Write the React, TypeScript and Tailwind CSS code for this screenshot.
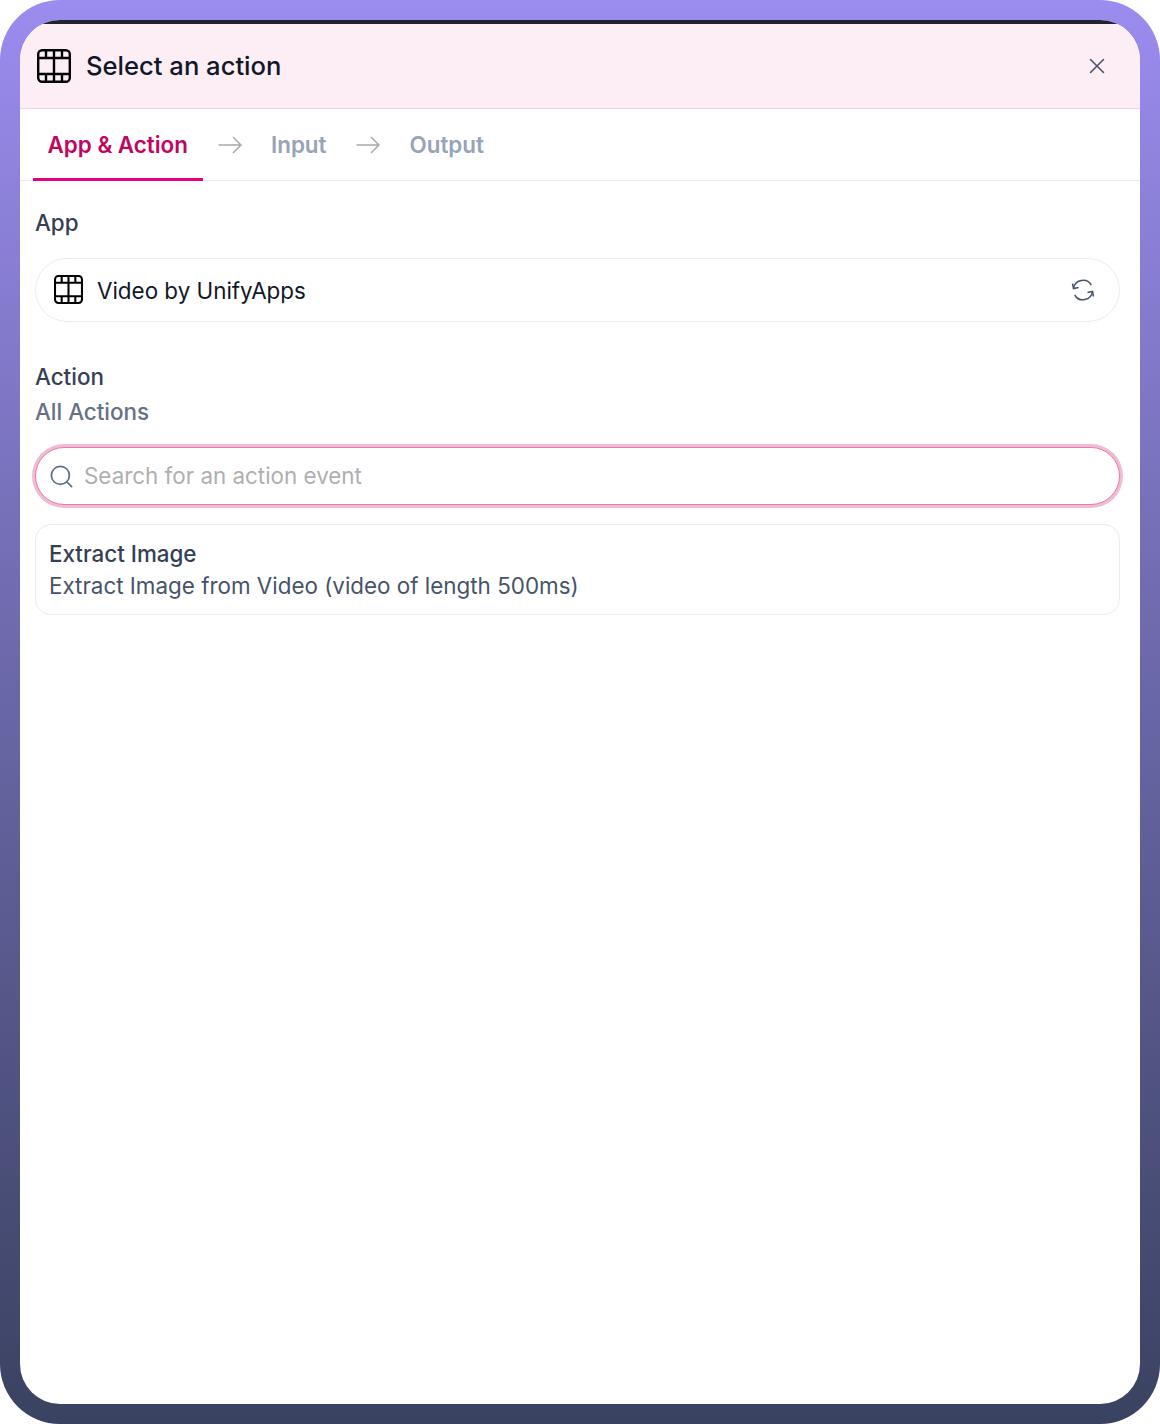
import React from 'react';
import { Search, X } from 'lucide-react';

const FilmIcon = ({ size }: { size: number }) => (
  <svg width={size} height={size} viewBox="0 0 34 34" fill="none" stroke="#000" strokeWidth="2.4">
    <rect x="1.2" y="1.2" width="31.6" height="31.6" rx="4" />
    <path d="M1.2 9h31.6M1.2 25h31.6M17 1.2v31.6M9 1.2V9M25 1.2V9M9 25v7.8M25 25v7.8" />
  </svg>
);

const StepArrow = () => (
  <svg width="24" height="18" viewBox="0 0 24 18" fill="none" stroke="#a8a8a8" strokeWidth="1.5" className="shrink-0">
    <path d="M0.5 9H23M15 1l8 8-8 8" />
  </svg>
);

const SyncIcon = () => (
  <svg width="24" height="24" viewBox="0 0 24 24" fill="none" stroke="#475467" strokeWidth="1.5">
    <path d="M2.5 10.5A9.6 9.6 0 0 1 20.3 7M21.5 13.5A9.6 9.6 0 0 1 3.7 17" />
    <path d="M1.5 5.5l1 5 5-1M22.5 18.5l-1-5-5 1" />
  </svg>
);

export default function App() {
  return (
    <div className="w-[1160px] h-[1424px] bg-white font-['Inter',sans-serif]">
      <div className="h-full rounded-[60px] p-5 bg-gradient-to-b from-[#9b8cef] to-[#3a4261]">
        <div className="h-full rounded-[40px] bg-white overflow-hidden flex flex-col">
          <div className="h-1 shrink-0 bg-[#1f2430]" />

          {/* Header */}
          <div className="h-[85px] shrink-0 bg-[#fdeef6] border-b border-[#fbcfe8] flex items-center justify-between pl-[17px] pr-[30px]">
            <div className="flex items-center gap-[15px]">
              <FilmIcon size={34} />
              <h2 className="text-[25.6px] leading-8 font-medium text-[#101828]">Select an action</h2>
            </div>
            <X className="w-[26px] h-[26px] text-[#475467]" strokeWidth={1.4} />
          </div>

          {/* Steps */}
          <div className="h-[72px] shrink-0 border-b border-[#eaecf0] flex pl-[13px]">
            <div className="w-[170px] h-[72px] pl-[14.5px] pt-[2px] border-b-[3px] border-[#e6007a] flex items-center text-[#c1065f] text-[22.4px] font-semibold">
              App &amp; Action
            </div>
            <div className="h-[71px] flex items-center">
              <span className="ml-[15px]"><StepArrow /></span>
              <span className="ml-[29px] text-[22.4px] font-semibold text-[#98a2b8]">Input</span>
              <span className="ml-[29px]"><StepArrow /></span>
              <span className="ml-[30px] text-[22.4px] font-semibold text-[#98a2b8]">Output</span>
            </div>
          </div>

          {/* Form */}
          <div className="flex-1 pl-[15px] pr-[20px] pt-[25px]">
            <div className="text-[22.4px] leading-[34px] font-medium text-[#344054]">App</div>
            <div className="mt-[18px] h-[64px] rounded-[32px] border border-[#eaecf0] flex items-center justify-between pl-[18px] pr-[24px]">
              <div className="flex items-center gap-[14px]">
                <FilmIcon size={29} />
                <span className="pt-[2px] text-[22.4px] text-[#101828]">Video by UnifyApps</span>
              </div>
              <SyncIcon />
            </div>

            <div className="mt-[38px] text-[22.4px] leading-[34px] font-medium text-[#344054]">Action</div>
            <div className="mt-px text-[22.4px] leading-[34px] font-medium text-[#667085]">All Actions</div>

            <div className="mt-[18px] h-[58px] rounded-[29px] bg-white border border-[#ee77a9] ring-[3px] ring-[#f0bcd5] flex items-center pl-[12px]">
              <Search className="w-[27px] h-[27px] text-[#5b6b8a]" strokeWidth={1.5} />
              <span className="ml-[9px] text-[22.4px] text-[#afafaf]">Search for an action event</span>
            </div>

            <div className="mt-[19px] h-[91px] rounded-[16px] border border-[#eaecf0] px-[13px] pt-[13px]">
              <div className="text-[22.4px] leading-[32px] font-medium text-[#344054]">Extract Image</div>
              <div className="text-[22.4px] leading-[32px] text-[#475467]">Extract Image from Video (video of length 500ms)</div>
            </div>
          </div>
        </div>
      </div>
    </div>
  );
}
